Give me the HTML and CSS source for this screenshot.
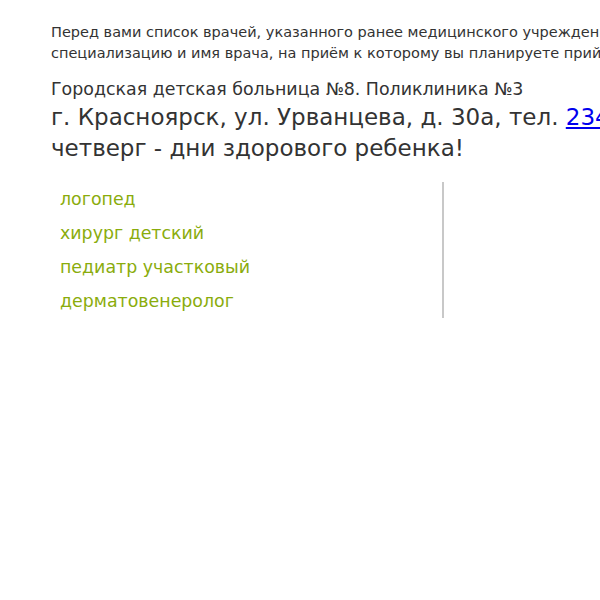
FILE: index.html
```html
<!DOCTYPE html>
<html lang="ru"><head><meta charset="utf-8"><title>Выбор врача</title><link rel="stylesheet" href="styles.css"></head>
<body>
<div class="page">
  <h1 class="title">Выбор врача</h1>
  <p class="intro">Перед вами список врачей, указанного ранее медицинского учреждения. Выберите<br>специализацию и имя врача, на приём к которому вы планируете прийти.</p>
  <div class="clinic">
    <div class="clinic-name">Городская детская больница №8. Поликлиника №3</div>
    <div class="clinic-addr">г. Красноярск, ул. Урванцева, д. 30а, тел. <a href="#">234-55-12</a>. Вторник и<br>четверг - дни здорового ребенка!</div>
  </div>
  <div class="doctors">
    <ul class="spec-list">
      <li class="spec">логопед</li>
      <li class="spec">хирург детский</li>
      <li class="spec">педиатр участковый</li>
      <li class="spec">дерматовенеролог</li>
    </ul>
    <div class="doc-list"></div>
  </div>
</div>
</body></html>
```
FILE: styles.css
```css
html,body{overflow:hidden}
body{margin:0;background:#fff;font-family:"DejaVu Sans",Verdana,sans-serif;color:#333}
.page{padding-left:51px;width:1000px}
.title{margin:-27px 0 0;font-size:24px;line-height:28px;font-weight:bold;color:#222}
.intro{margin:21px 0 0;font-size:14.5px;line-height:21px;white-space:nowrap;color:#333}
.clinic{margin-top:12px;white-space:nowrap}
.clinic-name{font-size:17.4px;line-height:26px}
.clinic-addr{font-size:23px;line-height:31px}
.clinic-addr a{color:#0000ee}
.doctors{display:flex;margin-top:18px}
.spec-list{list-style:none;margin:0;padding:0;width:393px}
.spec{font-size:17.4px;line-height:34px;padding-left:9px;color:#8aac0c;border-right:2px solid #c8c8c8}
```
